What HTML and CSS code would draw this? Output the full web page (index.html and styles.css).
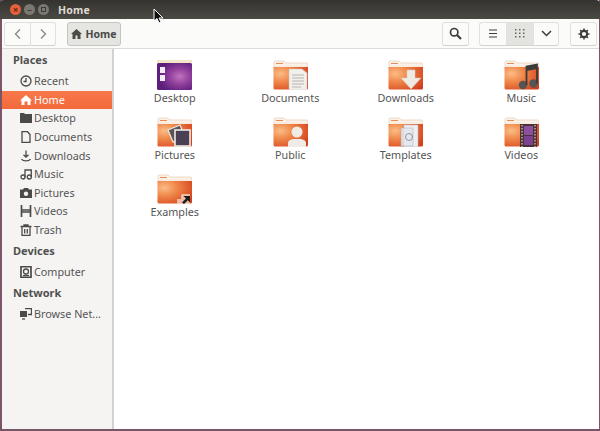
FILE: index.html
```html
<!DOCTYPE html>
<html lang="en">
<head>
<meta charset="utf-8">
<title>Home</title>
<link rel="stylesheet" href="styles.css">
</head>
<body>
<svg class="defs" width="0" height="0" aria-hidden="true">
  <defs>
    <radialGradient id="fg" cx="0.2" cy="0.3" r="0.95">
      <stop offset="0" stop-color="#fbbd86"/>
      <stop offset="0.4" stop-color="#ef8548"/>
      <stop offset="1" stop-color="#d23f1c"/>
    </radialGradient>
    <radialGradient id="pg" cx="0.65" cy="0.5" r="0.6">
      <stop offset="0" stop-color="#c272bc"/>
      <stop offset="0.5" stop-color="#8f3f9c"/>
      <stop offset="1" stop-color="#5e1f7c"/>
    </radialGradient>
    <symbol id="folder" viewBox="0 0 35 30">
      <path d="M1 2.500Q1 1 2.500 1H11L13 3H33.500Q34.500 3 34.500 4V8H1Z" fill="#f8f2ea" stroke="#e8c3a4" stroke-width=".6"/>
      <rect x="3" y="3" width="7" height="1" fill="#ee8a50"/>
      <rect x="1" y="5.500" width="34" height="1.200" fill="#fbe9da"/>
      <path d="M.5 7H35V28Q35 29.500 33.500 29.500H2Q.5 29.500 .5 28Z" fill="url(#fg)"/>
    </symbol>
  </defs>
</svg>
<div class="window">
  <header class="titlebar">
    <div class="wm">
      <span class="wm-btn wm-close">×</span>
      <span class="wm-btn">–</span>
      <span class="wm-btn"><i class="wm-max"></i></span>
    </div>
    <span class="title">Home</span>
  </header>

  <nav class="toolbar">
    <div class="group">
      <button class="btn btn-nav"><svg width="10" height="12" viewBox="0 0 10 12"><path d="M7 1.500 2.500 6 7 10.500" class="chev"/></svg></button>
      <button class="btn btn-nav"><svg width="10" height="12" viewBox="0 0 10 12"><path d="M3 1.500 7.500 6 3 10.500" class="chev"/></svg></button>
    </div>
    <button class="btn btn-path">
      <svg width="11" height="10" viewBox="0 0 11 10"><path d="M5.500 0 11 5H9.500V10H6.500V6.500H4.500V10H1.500V5H0Z" fill="#4a4a46"/></svg>
      Home
    </button>
    <span class="spacer"></span>
    <button class="btn btn-icon">
      <svg width="13" height="13" viewBox="0 0 13 13"><circle cx="5.200" cy="5.200" r="3.700" fill="none" stroke="#3c3c3c" stroke-width="1.700"/><path d="M8 8 12 12" stroke="#3c3c3c" stroke-width="2.200"/></svg>
    </button>
    <div class="group group-view">
      <button class="btn btn-view"><svg width="10" height="9" viewBox="0 0 10 9"><path d="M1 1H9M1 4.500H9M1 8H9" stroke="#3c3c3c" stroke-width="1.200"/></svg></button>
      <button class="btn btn-view btn-on"><svg width="10" height="9" viewBox="0 0 10 9" fill="#666"><rect x="0" y="0" width="1.500" height="1.500"/><rect x="4" y="0" width="1.500" height="1.500"/><rect x="8" y="0" width="1.500" height="1.500"/><rect x="0" y="3.500" width="1.500" height="1.500"/><rect x="4" y="3.500" width="1.500" height="1.500"/><rect x="8" y="3.500" width="1.500" height="1.500"/><rect x="0" y="7" width="1.500" height="1.500"/><rect x="4" y="7" width="1.500" height="1.500"/><rect x="8" y="7" width="1.500" height="1.500"/></svg></button>
      <button class="btn btn-view"><svg width="11" height="7" viewBox="0 0 11 7"><path d="M1 1 5.500 5.500 10 1" fill="none" stroke="#3c3c3c" stroke-width="1.500"/></svg></button>
    </div>
    <button class="btn btn-icon btn-gear">
      <svg width="12" height="12" viewBox="0 0 13 13"><circle cx="6.500" cy="6.500" r="3.400" fill="none" stroke="#3c3c3c" stroke-width="2.200"/><path d="M6.500 .5V2.500M6.500 10.500V12.500M.5 6.500H2.500M10.500 6.500H12.500M2.300 2.300 3.700 3.700M9.300 9.300 10.700 10.700M2.300 10.700 3.700 9.300M9.300 3.700 10.700 2.300" stroke="#3c3c3c" stroke-width="1.700"/></svg>
    </button>
  </nav>

  <div class="content">
    <aside class="sidebar">
      <h2 class="sec sec-first">Places</h2>
      <a class="row"><svg class="ico" viewBox="0 0 12 12"><circle cx="6" cy="6" r="5" class="ln"/><path d="M6 3V6.500H3.500" class="ln"/></svg>Recent</a>
      <a class="row row-on"><svg class="ico" viewBox="0 0 12 12"><path d="M6 1 12 6.500H10.500V11H7.500V7.500H4.500V11H1.500V6.500H0Z" fill="#fff"/></svg>Home</a>
      <a class="row"><svg class="ico" viewBox="0 0 12 12"><path d="M0 1H4L5 2H12V11H0Z" fill="#4a4a46"/></svg>Desktop</a>
      <a class="row"><svg class="ico" viewBox="0 0 12 12"><path d="M2 .7H7.500L10 3.500V11.300H2Z" class="ln"/></svg>Documents</a>
      <a class="row"><svg class="ico" viewBox="0 0 12 12"><path d="M6 .5V7M3.500 4.700 6 7.200 8.500 4.700M1.500 9C3 11.500 9 11.500 10.500 9" class="ln"/></svg>Downloads</a>
      <a class="row"><svg class="ico" viewBox="0 0 12 12"><circle cx="3" cy="9" r="2" class="ln"/><circle cx="9.300" cy="9" r="2" class="ln"/><path d="M5 9V2H11.300V9" class="ln"/></svg>Music</a>
      <a class="row"><svg class="ico" viewBox="0 0 12 12"><path d="M0 2.500H3L4 1H8L9 2.500H12V11H0Z" fill="#4a4a46"/><circle cx="6" cy="6.700" r="2.200" fill="#f5f4f2"/></svg>Pictures</a>
      <a class="row"><svg class="ico" viewBox="0 0 12 12"><path d="M1.500 0V12M10.500 0V12M1.500 5H10.500M1.500 7H10.500" class="ln ln-thick"/></svg>Videos</a>
      <a class="row"><svg class="ico" viewBox="0 0 12 12"><path d="M.5 2.500H11.500M4 2.500V1H8V2.500M2 2.500V11.300H10V2.500M4.700 5V9.500M7.300 5V9.500" class="ln"/></svg>Trash</a>
      <h2 class="sec">Devices</h2>
      <a class="row"><svg class="ico" viewBox="0 0 12 12"><path d="M1 .7H11V11.300H1Z" class="ln ln-thick"/><circle cx="6" cy="5.500" r="2.500" class="ln"/><path d="M3 9.500H9" class="ln"/></svg>Computer</a>
      <h2 class="sec">Network</h2>
      <a class="row"><svg class="ico" viewBox="0 0 12 12"><path d="M0 3H7V9H0Z" fill="#4a4a46"/><path d="M5 .7H11.500V6.500H8" class="ln"/><path d="M2 11H5" class="ln"/></svg><span class="row-label">Browse Net...</span></a>
    </aside>

    <main class="files">
      <div class="item">
        <svg class="thumb" viewBox="0 0 35 30">
          <rect x="0" y="0" width="35" height="4" fill="#f1e6c8"/>
          <rect x="0" y="3" width="35" height="27" rx="1.500" fill="url(#pg)"/>
          <rect x="3" y="7" width="5" height="6" fill="#f4ecf4"/><rect x="3" y="15" width="5" height="6" fill="#f4ecf4"/>
        </svg>
        <span class="name">Desktop</span>
      </div>
      <div class="item">
        <svg class="thumb" viewBox="0 0 35 30"><use href="#folder"/>
          <path d="M16 9H29L34 13V30H16Z" fill="#f2f0ec" stroke="#c9c4bc" stroke-width=".5"/>
          <path d="M19 15H31M19 18H31M19 21H31M19 24H31M19 27H28" stroke="#a9a59e" stroke-width=".8"/>
        </svg>
        <span class="name">Documents</span>
      </div>
      <div class="item">
        <svg class="thumb" viewBox="0 0 35 30"><use href="#folder"/>
          <path d="M19 10H27V18H33L23 29 13 18H19Z" fill="#eeeae4" stroke="#d8cfc4" stroke-width=".5"/>
        </svg>
        <span class="name">Downloads</span>
      </div>
      <div class="item">
        <svg class="thumb" viewBox="0 0 35 30"><use href="#folder"/>
          <circle cx="19" cy="25" r="4.200" fill="#565454"/><circle cx="29.500" cy="23.500" r="4.200" fill="#565454"/>
          <path d="M22.500 25V6.500L33 4.500V23.500" fill="none" stroke="#3c3a3a" stroke-width="1.800"/><path d="M22.500 6.500 33 4.500V9L22.500 11Z" fill="#3c3a3a"/>
        </svg>
        <span class="name">Music</span>
      </div>
      <div class="item">
        <svg class="thumb" viewBox="0 0 35 30"><use href="#folder"/>
          <path d="M11 13 23 8 28 20 16 25Z" fill="#5a5458" stroke="#f0ece6" stroke-width="1.200"/>
          <rect x="18" y="13" width="15" height="16" fill="#4b3f55" stroke="#efece6" stroke-width="1.600"/>
        </svg>
        <span class="name">Pictures</span>
      </div>
      <div class="item">
        <svg class="thumb" viewBox="0 0 35 30"><use href="#folder"/>
          <circle cx="24" cy="15" r="5.500" fill="#efece6"/>
          <path d="M15 30V26Q15 23 20 22H28Q33 23 33 26V30Z" fill="#efece6"/>
        </svg>
        <span class="name">Public</span>
      </div>
      <div class="item">
        <svg class="thumb" viewBox="0 0 35 30"><use href="#folder"/>
          <path d="M16 8H30V30H16Z" fill="#f0f0f2" stroke="#b9bcc6" stroke-width=".6"/>
          <path d="M13 11H25V29H13Z" fill="#e4e6ec" fill-opacity=".85" stroke="#a8adba" stroke-width=".5"/>
          <circle cx="21" cy="20" r="3.500" fill="none" stroke="#8d95a8" stroke-width="1"/>
        </svg>
        <span class="name">Templates</span>
      </div>
      <div class="item">
        <svg class="thumb" viewBox="0 0 35 30"><use href="#folder"/>
          <rect x="16" y="7" width="17" height="23" fill="#4b3238"/>
          <rect x="20" y="9" width="9" height="9" fill="#8c50a0"/><rect x="20" y="19" width="9" height="9" fill="#7a4290"/>
          <path d="M18 8V30M31 8V30" stroke="#c9b6a8" stroke-width="1.400" stroke-dasharray="1.500 1.500"/>
        </svg>
        <span class="name">Videos</span>
      </div>
      <div class="item">
        <svg class="thumb" viewBox="0 0 35 30"><use href="#folder"/>
          <path d="M20 30V25H24V21L25 20H33V30Z" fill="#f6e4d6" fill-opacity=".7"/>
          <path d="M25 28.500 29 24.500 26.500 22H33V28.500L30.800 26.300 27 30Z" fill="#1c1c1c"/>
        </svg>
        <span class="name">Examples</span>
      </div>
    </main>
  </div>
</div>
<svg class="cursor" width="11" height="16" viewBox="0 0 11 16"><path d="M1 1V13L4 10.500 6 15 8 14 6 10H10Z" fill="#111" stroke="#fff" stroke-width="1"/></svg>
</body>
</html>
```
FILE: styles.css
```css
* { box-sizing: border-box; }
html, body { margin: 0; height: 100%; }
body {
  background: #7a5568;
  font-family: "Noto Sans", sans-serif;
  font-size: 10.800px;
  color: #555;
  overflow: hidden;
  position: relative;
}
.defs { position: absolute; }
.window {
  height: 429px;
  margin-left: 2px;
  margin-right: 1px;
  display: flex;
  flex-direction: column;
  background: #fff;
}
.titlebar {
  height: 19px;
  flex: none;
  margin: 0 -1px 0 -2px;
  display: flex;
  align-items: center;
  padding-left: 10px;
  background: linear-gradient(#34332f, #4b4944);
  border-radius: 4px 4px 0 0;
}
.wm { display: flex; gap: 3px; width: 48px; }
.wm-btn {
  width: 11px;
  height: 11px;
  border-radius: 50%;
  background: #7a7870;
  color: #3c3b37;
  font-size: 9px;
  font-weight: 700;
  line-height: 10px;
  text-align: center;
  display: flex;
  align-items: center;
  justify-content: center;
}
.wm-close { background: #e2603a; color: #5c2010; }
.wm-max { width: 5px; height: 5px; border: 1px solid #3c3b37; display: block; }
.title { color: #dfdbd2; font-weight: 700; font-size: 10.500px; letter-spacing: .2px; }

.toolbar {
  height: 30px;
  flex: none;
  display: flex;
  align-items: center;
  padding: 0 2px 0 2px;
  background: #fbfbfa;
  border-bottom: 1px solid #dbdbd8;
}
.spacer { flex: 1; }
.group { display: flex; }
.btn {
  height: 24px;
  padding: 0;
  margin: 0;
  display: flex;
  align-items: center;
  justify-content: center;
  background: #fbfbfa;
  border: 1px solid #e0e0dd;
  border-bottom-color: #d2d2ce;
  border-radius: 3px;
  font: inherit;
  color: #4a4a46;
}
.btn-nav { width: 26px; border-radius: 0; }
.btn-nav:first-child { border-radius: 3px 0 0 3px; border-right: 0; }
.btn-nav:last-child { border-radius: 0 3px 3px 0; }
.chev { fill: none; stroke: #8a8a86; stroke-width: 1.400; }
.btn-path {
  width: 54px;
  margin-left: 11px;
  gap: 3px;
  background: #e5e5e2;
  border-color: #c4c4c0;
  font-weight: 700;
  font-size: 10.500px;
}
.btn-icon { width: 27px; }
.group-view { margin-left: 10px; }
.btn-view { width: 27px; border-radius: 0; border-right: 0; }
.btn-view:first-child { border-radius: 3px 0 0 3px; }
.btn-view:last-child { border-radius: 0 3px 3px 0; border-right: 1px solid #e0e0dd; width: 26px; }
.btn-on { background: #e3e3e0; }
.btn-gear { margin-left: 11px; }

.content { flex: 1; min-height: 0; display: flex; }
.sidebar {
  width: 112px;
  flex: none;
  background: #f5f4f2;
  border-right: 2px solid #d3d2cf;
  padding-top: 3px;
}
.sec {
  margin: 0;
  height: 20.500px;
  padding: 3.500px 0 0 11px;
  font-size: 11px;
  font-weight: 700;
  line-height: 15px;
  color: #505050;
}
.sec-first { height: 20px; padding-top: 0; }
.row {
  height: 18.600px;
  display: flex;
  align-items: center;
  padding-left: 18px;
  gap: 2px;
  line-height: 18px;
  white-space: nowrap;
}
.sec + .row { height: 22px; padding-top: 2px; }
.sec-first + .row { height: 18.600px; padding-top: 0; }
.row-on {
  background: linear-gradient(#f7784a, #f26a3c);
  color: #fff;
}
.ico { width: 12px; height: 12px; flex: none; }
.ln { fill: none; stroke: #4a4a46; stroke-width: 1.300; }
.ln-thick { stroke-width: 1.700; }

.files {
  flex: 1;
  display: grid;
  grid-template-columns: repeat(4, 115.500px);
  grid-auto-rows: 57px;
  padding: 11px 0 0 3px;
  align-content: start;
}
.item { display: flex; flex-direction: column; align-items: center; }
.thumb { width: 35px; height: 30px; flex: none; }
.name { line-height: 15px; }
.cursor { position: absolute; left: 153px; top: 8px; }
```
